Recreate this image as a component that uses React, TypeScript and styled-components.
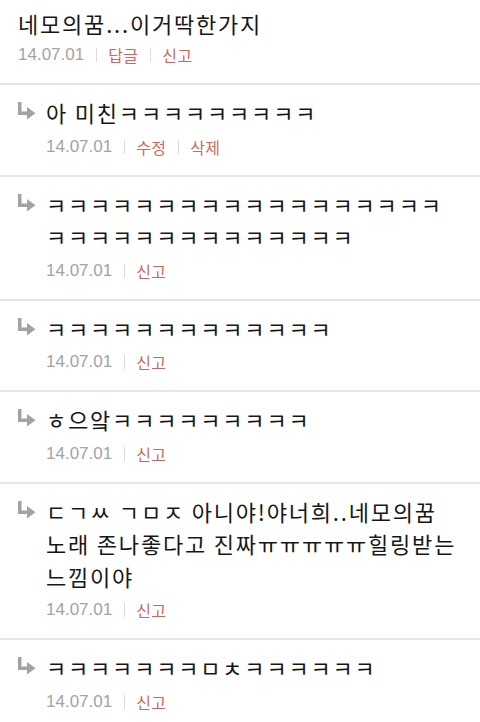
import styled, { createGlobalStyle } from 'styled-components';

const GlobalStyle = createGlobalStyle`
    body {
        margin: 0;
        background: #fff;
        font-family: "Noto Sans CJK KR", "Noto Sans", sans-serif;
    }
`;

const List = styled.div`
    display: flex;
    flex-direction: column;
    width: 480px;
`;

const Comment = styled.div<{ $top?: boolean }>`
    display: flex;
    align-items: flex-start;
    padding: ${p => p.$top ? '7px 22px 12px 18px' : '11px 22px 12px 18px'};
    border-bottom: 2px solid #e6e6e6;

    &:last-child {
        border-bottom: none;
    }
`;

const ReplyIcon = styled.div`
    display: flex;
    flex: 0 0 28px;
    height: 32px;
    padding-top: 6px;
    box-sizing: border-box;
`;

const Content = styled.div`
    flex: 1;
    min-width: 0;
`;

const Text = styled.p<{ $title?: boolean }>`
    margin: 0;
    font-size: 22px;
    letter-spacing: 1.8px;
    line-height: ${p => p.$title ? '32px' : '32.5px'};
    color: #161616;
    word-break: keep-all;
    overflow-wrap: anywhere;
`;

const Meta = styled.div<{ $top?: boolean }>`
    display: flex;
    align-items: center;
    height: 32px;
    margin-top: ${p => p.$top ? '0' : '2px'};
`;

const DateText = styled.span`
    font-family: "Liberation Sans", Arial, sans-serif;
    font-size: 17px;
    color: #a3a3a3;
`;

const Sep = styled.span`
    display: inline-block;
    width: 1px;
    height: 14px;
    margin: 0 11px 0 12px;
    background: #dcdcdc;
`;

const Action = styled.span`
    font-size: 16px;
    letter-spacing: 0.3px;
    color: #c96a60;
`;

const Arrow = () => (
    <svg width="18" height="18" viewBox="0 0 18 18">
        <rect x="0" y="0" width="3.5" height="13" fill="#a3a3a3" />
        <rect x="0" y="9.5" width="10" height="3.5" fill="#a3a3a3" />
        <polygon points="9,5 17.5,11.25 9,17.5" fill="#a3a3a3" />
    </svg>
);

interface Item {
    text: string,
    actions: string[]
}

const replies: Item[] = [
    { text: '아 미친ㅋㅋㅋㅋㅋㅋㅋㅋㅋ', actions: ['수정', '삭제'] },
    { text: 'ㅋㅋㅋㅋㅋㅋㅋㅋㅋㅋㅋㅋㅋㅋㅋㅋㅋㅋㅋㅋㅋㅋㅋㅋㅋㅋㅋㅋㅋㅋㅋㅋ', actions: ['신고'] },
    { text: 'ㅋㅋㅋㅋㅋㅋㅋㅋㅋㅋㅋㅋㅋ', actions: ['신고'] },
    { text: 'ㅎ으앜ㅋㅋㅋㅋㅋㅋㅋㅋㅋ', actions: ['신고'] },
    { text: 'ㄷㄱㅆ ㄱㅁㅈ 아니야!야너희..네모의꿈 노래 존나좋다고 진짜ㅠㅠㅠㅠㅠ힐링받는 느낌이야', actions: ['신고'] },
    { text: 'ㅋㅋㅋㅋㅋㅋㅋㅁㅊㅋㅋㅋㅋㅋㅋ', actions: ['신고'] },
];

const MetaRow = ({ actions, top }: { actions: string[], top?: boolean }) => (
    <Meta $top={top}>
        <DateText>14.07.01</DateText>
        {actions.map(a => (
            <span key={a} style={{ display: 'contents' }}>
                <Sep />
                <Action>{a}</Action>
            </span>
        ))}
    </Meta>
);

export default function App() {
    return (
        <List>
            <GlobalStyle />
            <Comment $top>
                <Content>
                    <Text $title>네모의꿈...이거딱한가지</Text>
                    <MetaRow actions={['답글', '신고']} top />
                </Content>
            </Comment>
            {replies.map((r, i) => (
                <Comment key={i}>
                    <ReplyIcon>
                        <Arrow />
                    </ReplyIcon>
                    <Content>
                        <Text>{r.text}</Text>
                        <MetaRow actions={r.actions} />
                    </Content>
                </Comment>
            ))}
        </List>
    );
}
